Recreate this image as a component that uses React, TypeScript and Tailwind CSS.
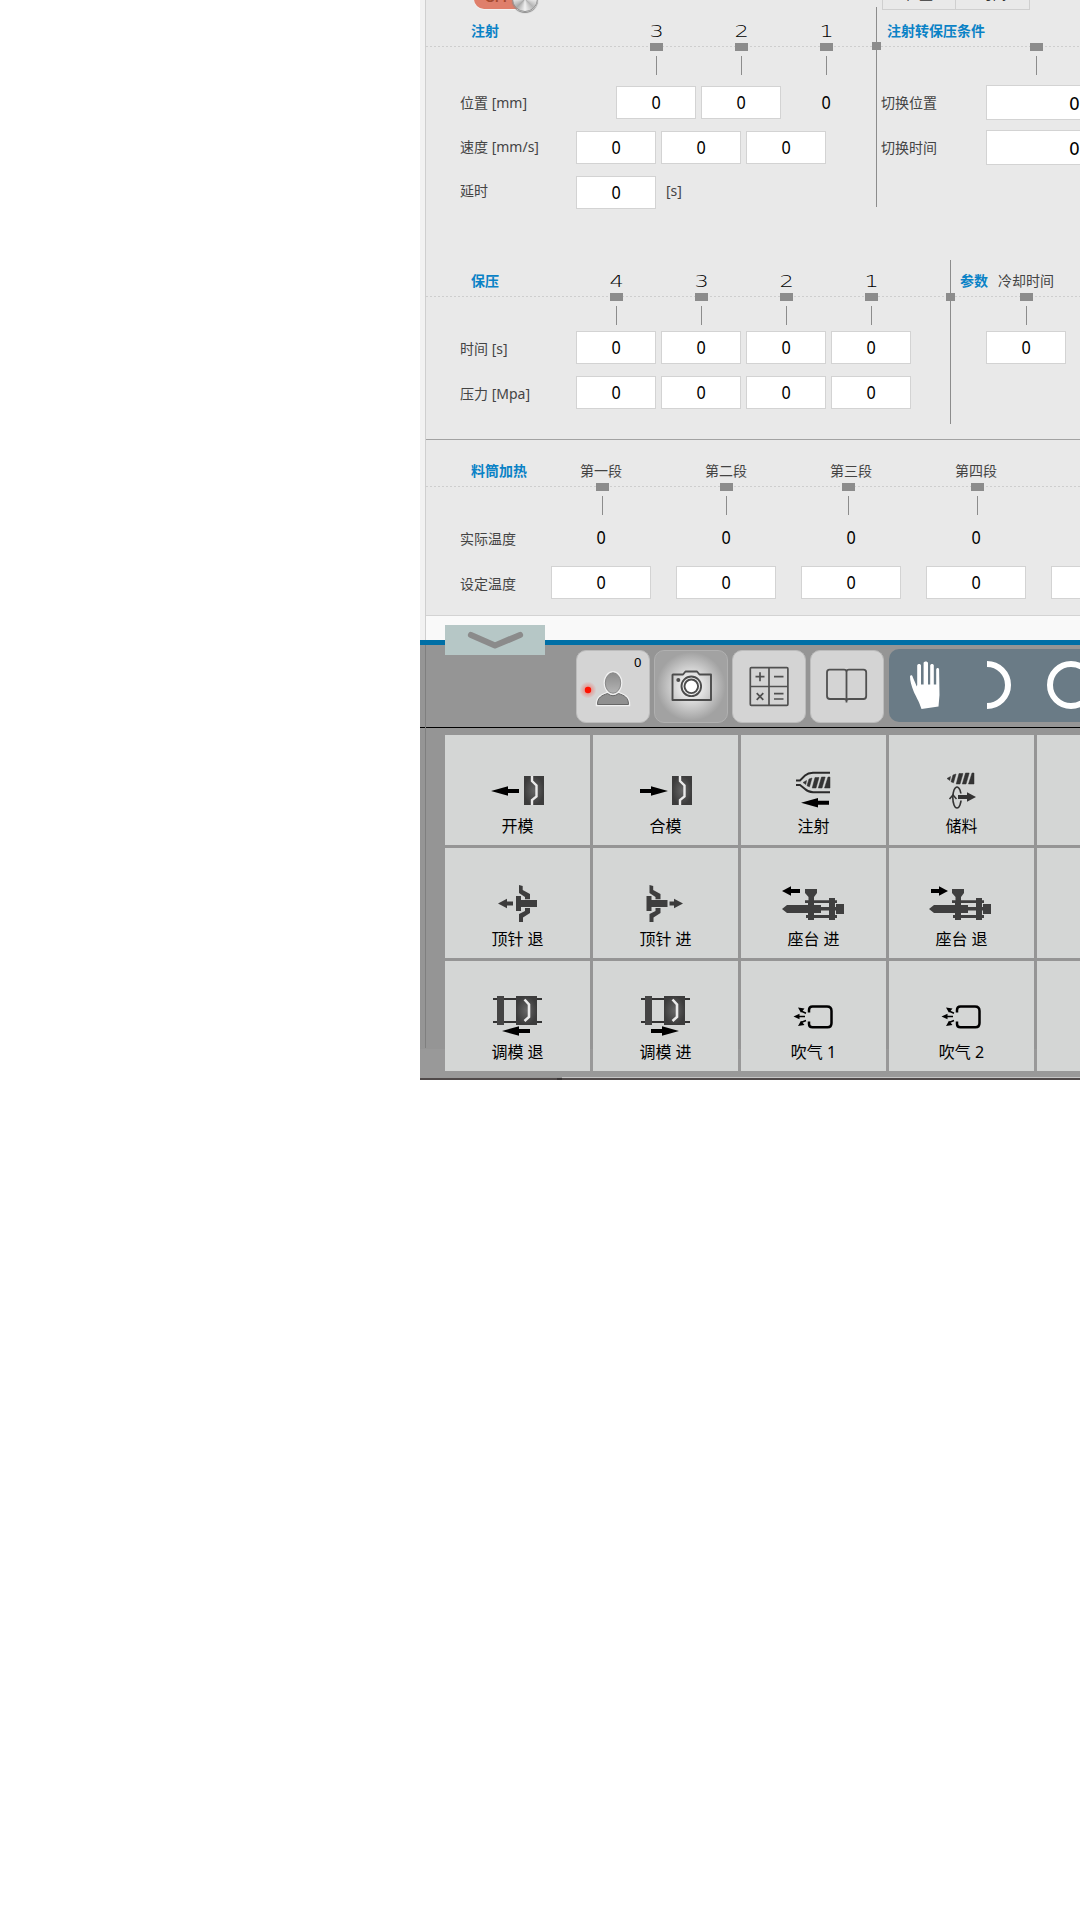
import type { ReactNode } from "react";

const DASH =
  "bg-[repeating-linear-gradient(to_right,#cecece_0_2px,transparent_2px_4px)] bg-no-repeat bg-[length:100%_1px]";

function Digit({ n }: { n: string }) {
  return (
    <span className="flex h-[23px] w-[13px] items-center justify-center pt-0.5 text-[15px] font-extralight leading-none text-black">
      <span className="scale-x-150 font-['DejaVu_Sans',sans-serif]">{n}</span>
    </span>
  );
}

function Marker({ className = "" }: { className?: string }) {
  return (
    <span className={"flex w-[13px] shrink-0 flex-col items-start " + className}>
      <span className="h-2 w-full bg-[#8c8c8c]" />
      <span className="ml-1.5 mt-[5px] h-[19px] w-px bg-[#8c8c8c]" />
    </span>
  );
}

function Stage({ n }: { n: string }) {
  return (
    <span className="flex w-[13px] flex-col">
      <Digit n={n} />
      <Marker />
    </span>
  );
}

function Field({ wide = false }: { wide?: boolean }) {
  return (
    <span
      className={
        "flex h-[33px] shrink-0 items-center justify-center border border-[#d3d3d3] bg-white " +
        (wide ? "w-[100px]" : "w-20")
      }
    >
      <Value />
    </span>
  );
}

function Value() {
  return <span className="scale-x-90 pb-px text-[18px] leading-none text-black">0</span>;
}

function Title({ children }: { children: ReactNode }) {
  return (
    <span className="block whitespace-nowrap text-[14px] font-bold leading-[22px] text-[#0a82c6]">{children}</span>
  );
}

function Label({ children, className = "" }: { children: ReactNode; className?: string }) {
  return (
    <span className={"shrink-0 whitespace-nowrap text-[14px] leading-5 text-[#444] " + className}>{children}</span>
  );
}

function Divider({ className, knob }: { className: string; knob: string }) {
  return (
    <div className={"relative flex w-[9px] shrink-0 justify-center " + className}>
      <span className="h-full w-px bg-[#8c8c8c]" />
      <span className={"absolute left-0 h-2 w-[9px] bg-[#8c8c8c] " + knob} />
    </div>
  );
}

function InjectionSection() {
  return (
    <section className="flex h-[260px]">
      <div className="w-[446px] shrink-0">
        <div className="flex h-5 pl-12">
          <div className="relative h-[9px] w-16">
            <div className="absolute bottom-0 left-0 h-5 w-[54px] rounded-l-full bg-[#df7f6b] shadow-[0_1px_0_#f3f3f3]">
              <span className="absolute left-[11px] top-[1px] font-['Liberation_Sans'] text-[13px] font-bold leading-[15px] text-[#a4492f]">
                OFF
              </span>
            </div>
            <div className="absolute -bottom-[3px] right-0 size-[26px] rounded-full border border-[#919191] bg-[conic-gradient(#ddd,#aaa,#eee,#b5b5b5,#f2f2f2,#aaa,#e8e8e8,#b8b8b8,#ddd)] shadow-[0_1px_1px_#888]" />
          </div>
        </div>
        <div className={"flex h-[55px] justify-between pl-[45px] pr-[39px] bg-[position:0_26px] " + DASH}>
          <div className="w-[140px]">
            <Title>注射</Title>
          </div>
          <div className="flex gap-[72px]">
            <Stage n="3" />
            <Stage n="2" />
            <Stage n="1" />
          </div>
        </div>
        <div className="mt-[11px] flex flex-col gap-3 pl-[34px]">
          <div className="flex h-[33px] items-center">
            <Label className="w-[156px]">位置 [mm]</Label>
            <div className="flex gap-[5px]">
              <Field />
              <Field />
              <span className="flex w-20 items-center justify-center">
                <Value />
              </span>
            </div>
          </div>
          <div className="flex h-[33px] items-center">
            <Label className="w-[116px] pb-px">速度 [mm/s]</Label>
            <div className="flex gap-[5px]">
              <Field />
              <Field />
              <Field />
            </div>
          </div>
          <div className="flex h-[33px] items-center">
            <Label className="w-[116px] pb-[3px]">延时</Label>
            <Field />
            <Label className="ml-2.5 pb-[3px]">[s]</Label>
          </div>
        </div>
      </div>
      <Divider className="mt-[7px] h-[200px]" knob="top-[35px]" />
      <div className="w-[199px] overflow-hidden">
        <div className="flex h-5 pl-px">
          <div className="relative h-2.5 w-[148px]">
            <div className="absolute bottom-0 flex h-[34px] w-full divide-x divide-[#cfcfcf] border border-[#cfcfcf] text-[14px] leading-[32px] text-[#333]">
              <span className="w-[73px] pt-px text-center">位置</span>
              <span className="flex-1 pt-px text-center">时间</span>
            </div>
          </div>
        </div>
        <div className={"h-[55px] pl-1.5 bg-[position:0_26px] " + DASH}>
          <div className="h-[23px]">
            <Title>注射转保压条件</Title>
          </div>
          <Marker className="ml-[143px]" />
        </div>
        <div className="mt-2.5 flex flex-col gap-2.5">
          {["切换位置", "切换时间"].map((t) => (
            <div key={t} className="flex h-[35px] items-center">
              <Label className="w-[105px]">{t}</Label>
              <span className="flex h-[35px] w-[180px] shrink-0 items-center border border-[#d3d3d3] bg-white pl-[82px] pt-1 font-['DejaVu_Sans'] text-[17px] leading-none">
                0
              </span>
            </div>
          ))}
        </div>
      </div>
    </section>
  );
}

function HoldingSection() {
  return (
    <section className="flex h-[179px]">
      <div className="w-[520px] shrink-0 pt-2.5">
        <div className={"flex h-[55px] pl-[45px] bg-[position:0_26px] " + DASH}>
          <div className="w-[139px]">
            <Title>保压</Title>
          </div>
          <div className="flex gap-[72px]">
            <Stage n="4" />
            <Stage n="3" />
            <Stage n="2" />
            <Stage n="1" />
          </div>
        </div>
        <div className="mt-1.5 flex flex-col gap-3 pl-[34px]">
          {["时间 [s]", "压力 [Mpa]"].map((t) => (
            <div key={t} className="flex h-[33px] items-center">
              <Label className="w-[116px] pt-0.5">{t}</Label>
              <div className="flex gap-[5px]">
                <Field />
                <Field />
                <Field />
                <Field />
              </div>
            </div>
          ))}
        </div>
      </div>
      <Divider className="h-[164px]" knob="top-[33px]" />
      <div className="flex-1 pt-2.5">
        <div className={"h-[55px] pl-[5px] bg-[position:0_26px] " + DASH}>
          <div className="flex h-[23px] gap-2.5">
            <Title>参数</Title>
            <Label className="leading-[22px]">冷却时间</Label>
          </div>
          <Marker className="ml-[60px]" />
        </div>
        <div className="mt-1.5 pl-[31px]">
          <Field />
        </div>
      </div>
    </section>
  );
}

function HeatingSection() {
  return (
    <section className="h-[176px] overflow-hidden border-t border-[#a2a2a2] pt-[20px]">
      <div className="flex h-[23px] pl-[45px]">
        <div className="w-[84px]">
          <Title>料筒加热</Title>
        </div>
        {["第一段", "第二段", "第三段", "第四段"].map((t) => (
          <Label key={t} className="w-[125px] pl-[25px] leading-[22px]">
            {t}
          </Label>
        ))}
      </div>
      <div className={"flex h-8 bg-[position:0_3px] pl-[170px] " + DASH}>
        <Marker />
        <Marker className="ml-[111px]" />
        <Marker className="ml-[109px]" />
        <Marker className="ml-[116px]" />
      </div>
      <div className="mt-1.5 flex h-[33px] items-center pl-[34px]">
        <Label className="w-[91px] pt-0.5">实际温度</Label>
        <div className="flex gap-[25px]">
          {[0, 1, 2, 3].map((i) => (
            <span key={i} className="flex w-[100px] justify-center">
              <Value />
            </span>
          ))}
        </div>
      </div>
      <div className="mt-3 flex h-[33px] items-center pl-[34px]">
        <Label className="w-[91px] pt-0.5">设定温度</Label>
        <div className="flex gap-[25px]">
          {[0, 1, 2, 3, 4].map((i) => (
            <Field key={i} wide />
          ))}
        </div>
      </div>
    </section>
  );
}

function ToolButton({ children, lit = false }: { children: ReactNode; lit?: boolean }) {
  return (
    <button
      className={
        "relative h-[73px] w-[74px] shrink-0 rounded-[10px] border " +
        (lit
          ? "border-[#b0b0b0] bg-[radial-gradient(circle,#f8f8f8_10%,#a2a2a2_68%)]"
          : "border-[#bcbcbc] bg-[#d4d4d4]")
      }
    >
      <svg className="absolute -left-px -top-px" width="74" height="73" viewBox="0 0 74 73" fill="none">
        {children}
      </svg>
    </button>
  );
}

function Toolbar() {
  return (
    <div className="flex h-[83px] border-b border-black pl-[156px] pt-[5px]">
      <div className="relative flex gap-1">
        <ToolButton>
          <defs>
            <linearGradient id="head" x1="0" y1="0" x2="0" y2="1">
              <stop stopColor="#8c8c8c" />
              <stop offset="1" stopColor="#b4b4b4" />
            </linearGradient>
            <radialGradient id="glow">
              <stop offset=".2" stopColor="#ff3020" stopOpacity=".45" />
              <stop offset="1" stopColor="#ff3020" stopOpacity="0" />
            </radialGradient>
          </defs>
          <g stroke="#f0f0f0" strokeWidth="3.5">
            <path d="M21.5 54.5C21.500 47 26 45.500 31.500 43.500Q37 48 42.500 43.500C48 45.500 52.500 47 52.500 54.500Z" />
            <ellipse cx="37" cy="33" rx="7.700" ry="10.200" />
          </g>
          <path
            d="M21.5 54.5C21.500 47 26 45.500 31.500 43.500Q37 48 42.500 43.500C48 45.500 52.500 47 52.500 54.500Z"
            fill="#909090"
            stroke="#666"
          />
          <ellipse cx="37" cy="33" rx="7.700" ry="10.200" fill="url(#head)" stroke="#888" />
          <circle cx="12" cy="40" r="8.500" fill="url(#glow)" />
          <circle cx="12" cy="40" r="3.200" fill="#f10" />
        </ToolButton>
        <span className="absolute left-[58px] top-1 text-[13px] leading-4 text-black">0</span>
        <ToolButton lit>
          <g stroke="#4c4c4c" strokeWidth="1.900">
            <path d="M19 24.500H29L31.500 21.500H43L45.500 24.500H57V50H18.500V25Z" strokeLinejoin="round" />
            <circle cx="37.300" cy="36.300" r="9.800" />
            <circle cx="37.300" cy="36.300" r="6.800" fill="#fff" />
          </g>
          <circle cx="24.300" cy="30" r="2" fill="#4c4c4c" />
        </ToolButton>
        <ToolButton>
          <g stroke="#505050" strokeWidth="1.700">
            <rect x="18.300" y="17.700" width="37.600" height="37.600" rx="1" />
            <path d="M37 18V55M18 36.500H56M23.500 26.700H32.500M28 22.200V31.200M42 26.700H51.500M42 43.700H51.500M42 49H51.500M24.700 43.200L31.300 49.800M31.300 43.200L24.700 49.800" />
          </g>
        </ToolButton>
        <ToolButton>
          <path
            d="M36.500 52.500V22Q36.500 19.700 34 19.700H19.500Q17 19.700 17 22.500V46Q17 49 20 49H34Q36.500 49 36.500 51Q36.500 49 39 49H53.500Q56.200 49 56.200 46V22.500Q56.200 19.700 53.500 19.700H39Q36.500 19.700 36.500 22"
            stroke="#505050"
            strokeWidth="1.800"
          />
        </ToolButton>
      </div>
      <div className="-mt-px ml-[5px] h-[73px] w-[201px] shrink-0 rounded-[10px] bg-[#6a7b86]">
        <svg width="201" height="73" viewBox="0 0 201 73" fill="none">
          <path
            d="M32.500 60C30 52 26.500 47 24.500 42C22.500 37 21 32 21 27.500C21.500 25.500 23.500 25.800 23.700 28L27.800 37.500L28.200 36V16.500C28.400 14.500 31.800 14.500 32 16.500V35.500H34.600V14C34.800 12 38.800 12 39 14V35.500H41.200V16.500C41.400 14.500 44.700 14.500 44.800 16.500V35.500H47.200V20.500C47.400 18.500 50 18.500 50.100 20.500L50.500 46L49.500 57.500Z"
            fill="#fff"
          />
          <path d="M98 15A21 21 0 0 1 98 57" stroke="#fff" strokeWidth="6" />
          <circle cx="182" cy="36" r="21" stroke="#fff" strokeWidth="6" />
        </svg>
      </div>
    </div>
  );
}

/* Long-headed arrow; dir -1 points left, 1 points right. */
function Arrow({ x, y, dir }: { x: number; y: number; dir: 1 | -1 }) {
  return (
    <path
      transform={`translate(${x} ${y}) scale(${dir} 1)`}
      d="M0 0L-17 -4.800V-2H-28V2H-17V4.800Z"
      fill="#000"
    />
  );
}

function ShortArrow({
  x,
  y,
  dir,
  fill = "#000",
  len = 18,
}: {
  x: number;
  y: number;
  dir: 1 | -1;
  fill?: string;
  len?: number;
}) {
  return (
    <g transform={`translate(${x} ${y}) scale(${dir} 1)`} fill={fill}>
      <path d="M0 0L-9 -4.800V4.800Z" />
      <rect x={-len} y="-2" width={len - 8} height="4" />
    </g>
  );
}

function Mould() {
  return (
    <>
      <rect x="79" y="41" width="20" height="29" fill="url(#steel)" />
      <path d="M87 41V46L91.500 50.500V61.500L87 65V70" stroke="#eaeaea" strokeWidth="2.400" />
    </>
  );
}

function Ejector() {
  return (
    <g fill="#3e3e3e">
      <path d="M71 48H76V52H92V59H76V63H71Z" />
      <path d="M74 37L77.700 38V42L85 46V51.300H80V49L74 45Z" stroke="#d4d6d5" strokeWidth=".8" paintOrder="stroke" />
      <path d="M80 60H85V65L78 69.500V74H74V66L80 63Z" stroke="#d4d6d5" strokeWidth=".8" paintOrder="stroke" />
    </g>
  );
}

function Carriage() {
  return (
    <g fill="#3f3f3f">
      <path d="M64 41H76V45L73 49V52.300H96V55H73V58H67.500V55H64V52.300H67.500V49L64 45Z" />
      <path d="M41 61L46 57H80V59H95V62.500H80V65H46Z" />
      <rect x="67" y="54" width="6" height="18" />
      <rect x="88" y="50" width="6" height="22" />
      <rect x="65" y="67" width="31" height="3" />
      <rect x="95" y="56" width="8" height="10" />
    </g>
  );
}

function MouldAdjust() {
  return (
    <>
      <path d="M48 38H97M48 61H97" stroke="#333" strokeWidth="2" />
      <rect x="52" y="35" width="7" height="29" fill="#444" />
      <path d="M71 35H92V64H71Z" fill="url(#steel)" />
      <path d="M79.500 38.500L84 43.500V56L79.500 60" stroke="#eaeaea" strokeWidth="2.600" />
    </>
  );
}

function Screw({ x, y }: { x: number; y: number }) {
  return (
    <g transform={`translate(${x} ${y})`} fill="#333" stroke="#333" strokeWidth=".5">
      <path d="M0 5.500L3.500 3.500L2.800 7.500Z" />
      <path d="M6 2L9 1L6.500 9.800L4 8.800Z" />
      <path d="M12 .5H16L13 11H9.200Z" />
      <path d="M18.500 0H22.200L19 11H15.300Z" />
      <path d="M25 0H27V11H21.500Z" />
    </g>
  );
}

function AirBlow() {
  return (
    <g stroke="#000">
      <path
        d="M68 51.500V49Q68 45.500 71.500 45.500H86Q90.500 45.500 90.500 50V62Q90.500 66.300 86.500 66.300H71.500Q68 66.300 68 63V60.500"
        strokeWidth="2.500"
      />
      <path d="M57 55.500H64M60 50L65 52.200M60 61.500L65 59.500" strokeWidth="1.500" />
      <path
        d="M52.500 55.500L58.500 52.800V58.200ZM57 46.500L63.500 47.500L60 51.800ZM57 65L63.500 64L60 59.800Z"
        fill="#000"
        stroke="none"
      />
    </g>
  );
}

const actions: { label: string; icon: ReactNode }[] = [
  { label: "开模", icon: <><Arrow x={46} y={56} dir={-1} /><Mould /></> },
  { label: "合模", icon: <><Arrow x={75} y={56} dir={1} /><Mould /></> },
  {
    label: "注射",
    icon: (
      <>
        <path
          d="M55 45.500H59L64 40.500Q67 38 72 37.800H89M55 50H59L64 54Q67 57 72 57.200H89"
          stroke="#2a2a2a"
          strokeWidth="1.900"
        />
        <Screw x={62} y={42} />
        <Arrow x={60} y={67.700} dir={-1} />
      </>
    ),
  },
  {
    label: "储料",
    icon: (
      <>
        <Screw x={58} y={38} />
        <ellipse cx="68" cy="62.500" rx="4.200" ry="10.500" stroke="#333" strokeWidth="1.600" />
        <path d="M60.500 64L64 60L67.500 64" stroke="#333" strokeWidth="1.500" />
        <rect x="68.500" y="58.500" width="6" height="7" fill="#d4d6d5" />
        <ShortArrow x={87} y={62} dir={1} fill="#333" />
      </>
    ),
  },
  { label: "", icon: null },
  { label: "顶针 退", icon: <><ShortArrow x={53} y={55.500} dir={-1} fill="#3c3c3c" len={15} /><Ejector /></> },
  {
    label: "顶针 进",
    icon: (
      <>
        <ShortArrow x={90} y={55.500} dir={1} fill="#3c3c3c" len={13.5} />
        <g transform="translate(-17.500 0)">
          <Ejector />
        </g>
      </>
    ),
  },
  { label: "座台 进", icon: <><ShortArrow x={41} y={43} dir={-1} /><Carriage /></> },
  {
    label: "座台 退",
    icon: (
      <>
        <ShortArrow x={59} y={43} dir={1} len={17} />
        <g transform="translate(-1 0)">
          <Carriage />
        </g>
      </>
    ),
  },
  { label: "", icon: null },
  { label: "调模 退", icon: <><MouldAdjust /><Arrow x={57} y={70} dir={-1} /></> },
  { label: "调模 进", icon: <><MouldAdjust /><Arrow x={86} y={70} dir={1} /></> },
  { label: "吹气 1", icon: <AirBlow /> },
  { label: "吹气 2", icon: <AirBlow /> },
  { label: "", icon: null },
];

function ActionGrid() {
  return (
    <div className="mt-[7px] grid w-[737px] grid-cols-[repeat(5,145px)] grid-rows-[repeat(3,110px)] gap-[3px] pl-[25px]">
      {actions.map((a, i) => (
        <button key={i} className="flex flex-col items-center bg-[#d4d6d5]">
          <svg width="145" height="80" viewBox="0 0 145 80" fill="none">
            <defs>
              <radialGradient id="steel">
                <stop stopColor="#666" />
                <stop offset="1" stopColor="#3c3c3c" />
              </radialGradient>
            </defs>
            {a.icon}
          </svg>
          <span className="h-6 whitespace-nowrap text-[16px] leading-[22px] text-black">{a.label}</span>
        </button>
      ))}
    </div>
  );
}

export default function App() {
  return (
    <main className="h-[1920px] w-[1080px] overflow-hidden bg-white font-['Noto_Sans','Noto_Sans_CJK_SC',sans-serif]">
      <div className="ml-[420px] flex h-[1080px] w-[660px] flex-col overflow-hidden">
        <div className="h-[640px] shrink-0 bg-[#f2f2f2] pl-[5px]">
          <div className="h-full border-l border-[#cfcfcf] bg-[#e9e9e9]">
            <InjectionSection />
            <HoldingSection />
            <HeatingSection />
            <div className="h-[25px] border-t border-[#d3d3d3] bg-[#f9f9f9]" />
          </div>
        </div>
        <div className="relative h-[440px] shrink-0 border-t-[5px] border-[#006fa6] bg-[linear-gradient(#959595_404px,#999_404px)]">
          <span className="absolute left-[5px] top-0 h-[403px] w-px bg-[#7f7f7f]" />
          <div className="absolute -top-5 left-[25px] z-10 flex h-[30px] w-[100px] items-center justify-center bg-[#b6c7c6]">
            <svg width="60" height="22" viewBox="0 0 60 22" fill="none">
              <path d="M6 6L30 16.500L55 6" stroke="#8b8b8b" strokeWidth="6.200" strokeLinecap="round" strokeLinejoin="round" />
            </svg>
          </div>
          <Toolbar />
          <ActionGrid />
          <div className="mt-1.5 h-px bg-[linear-gradient(to_right,transparent_142px,#c6c6c6_142px)]" />
          <div className="h-0.5 bg-[linear-gradient(to_right,#504a4a_137px,#383434_137px_142px,#504a4a_142px)]" />
        </div>
      </div>
    </main>
  );
}
